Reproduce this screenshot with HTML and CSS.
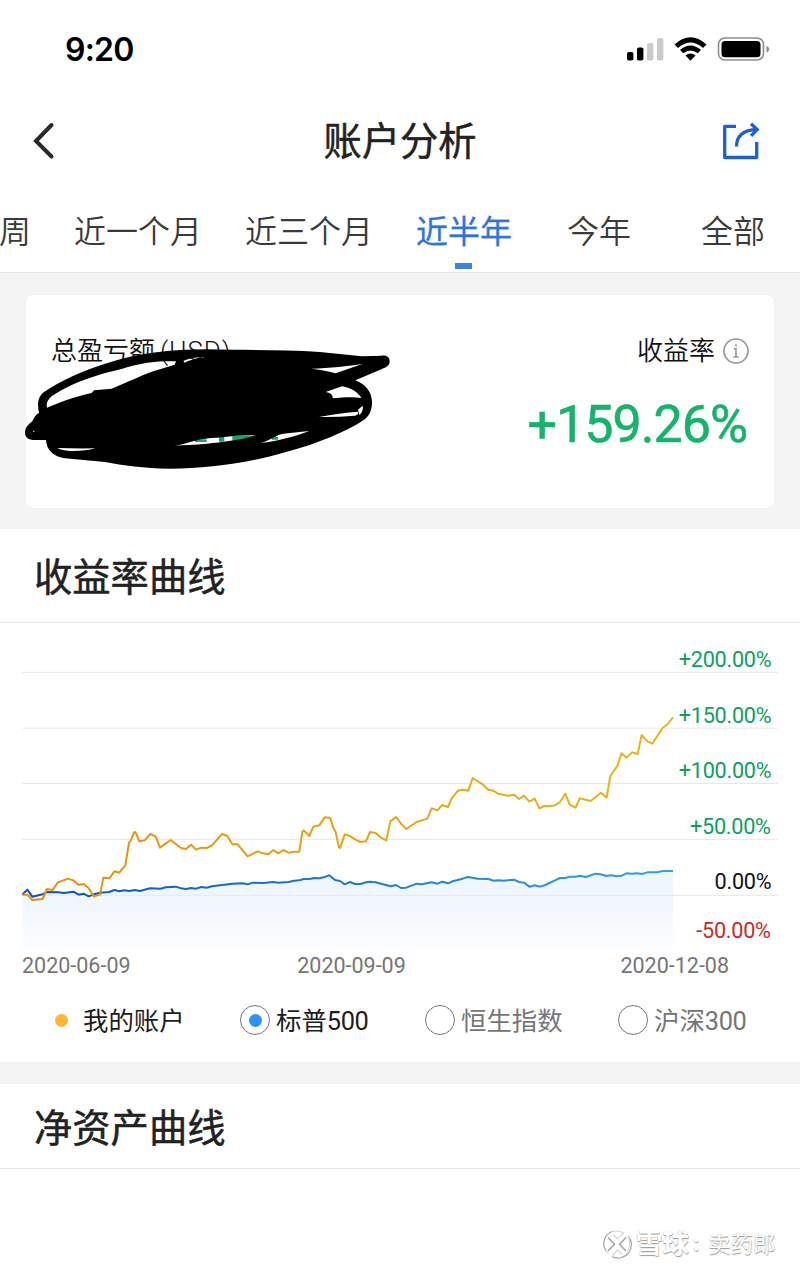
FILE: index.html
```html
<!DOCTYPE html>
<html lang="zh-CN">
<head>
  <meta charset="UTF-8" />
  <meta name="viewport" content="width=device-width, initial-scale=1.0" />
  <title>账户分析</title>
  <link rel="stylesheet" href="styles.css">
</head>
<body>

  <div class="status-bar">
    <span class="time">9:20</span>
    <svg class="status-icons" width="144" height="26" viewBox="0 0 144 26">
      <rect x="1" y="15" width="6.4" height="8.5" rx="1.8" />
      <rect x="11" y="10.5" width="6.4" height="13" rx="1.8" />
      <g fill="#cbcbcb">
        <rect x="21" y="6" width="6.4" height="17.5" rx="1.8" />
        <rect x="31" y="1" width="6.4" height="22.5" rx="1.8" />
      </g>
      <path d="M48.5 7.5 Q64.5 -7 80.5 7.5 L77 11 Q64.5 0 52 11 Z M54 13 Q64.5 4 75 13 L71.7 16.3 Q64.5 10.5 57.3 16.3 Z M59.5 18.5 Q64.5 14.5 69.5 18.5 L64.5 23.7 Z" />
      <rect x="92.5" y="1" width="45" height="22" rx="6.5" fill="none" stroke="#8d8d8d" stroke-width="1.6" />
      <rect x="95.5" y="4" width="39" height="16.3" rx="3.5" />
      <path d="M140.5 8.5 Q143.2 10 143.2 12.3 Q143.2 14.6 140.5 16 Z" fill="#8d8d8d" />
    </svg>
  </div>

  <header class="nav">
    <svg class="back" width="24" height="38" viewBox="0 0 24 38">
      <path d="M19.5 3 L4 19 L19.5 34.5" fill="none" stroke="#29292b" stroke-width="4" stroke-linecap="round" />
    </svg>
    <h1>账户分析</h1>
    <svg class="share" width="38" height="40" viewBox="0 0 38 40">
      <g fill="none" stroke="#1a62c9" stroke-width="3.3">
        <path d="M14 5.3 H2.7 V36.5 H34.7 V21" stroke-linejoin="round" />
        <path d="M14.5 25.5 C14.5 15.5 21 8.6 35 8.6 M29 2.8 L35.2 8.6 L29 14.8" />
      </g>
    </svg>
  </header>

  <nav class="tabs">
    <a class="tab tab-week">周</a>
    <a class="tab">近一个月</a>
    <a class="tab">近三个月</a>
    <a class="tab active">近半年</a>
    <a class="tab tab-year">今年</a>
    <a class="tab tab-all">全部</a>
  </nav>

  <section class="summary">
    <div class="card">
      <div class="amount">
        <div class="label">总盈亏额<span class="unit">(USD)</span></div>
      </div>
      <div class="rate">
        <div class="label">收益率
          <svg width="26" height="26" viewBox="0 0 26 26">
            <g fill="none" stroke="#969696">
              <circle cx="13" cy="13" r="12" stroke-width="1.7" />
              <path d="M13 6.2 V8.4 M10.8 10.8 H13 V19 M10.5 19 H15.5" stroke-width="1.6" />
            </g>
          </svg>
        </div>
        <div class="value">+159.26%</div>
      </div>

      <!-- hand-drawn scribble over the amount -->
      <svg class="scribble" width="410" height="170" viewBox="0 0 1230 510">
        <path fill="#12a866" d="M585 358 H620 V366 H585 Z M657 350 H673 V365 H657 Z M697 348 H760 L730 362 H697 Z M815 350 H834 V359 H815 Z" />
        <path fill="#000" fill-rule="evenodd" d="
          M75 338 C75 320 88 312 97 304 C102 292 108 283 117 279 C112 254 112 231 132 216
          C180 184 254 149 330 127 C410 101 510 88 620 88 C740 91 850 89 960 96 L1085 109 L1145 107
          C1163 105 1169 114 1169 124 C1169 138 1158 142 1146 147 L1066 181
          C1098 193 1115 218 1116 244 C1117 266 1110 288 1088 302 C1040 333 960 369 850 398
          C735 431 620 445 510 446 C430 445 370 436 315 426 L195 415 C162 411 139 390 138 360
          L100 360 C83 359 75 350 75 338 Z
          M141 263 C137 246 147 232 170 219 C230 184 290 165 350 151 C395 138 440 125 497 124 L528 124 L524 134 L460 154
          C415 170 370 193 335 206 L282 211 L275 219 C220 231 180 247 141 263 Z
          M551 122 C570 114 590 111 616 112 Q580 116 552 128 Z
          M934 146 C990 144 1045 139 1089 131 L1007 160 C980 153 960 149 934 146 Z
          M977 216 L1026 199 C1055 204 1074 217 1084 234 C1060 230 1030 232 998 235 Q1000 220 977 216 Z
          M957 291 Q1020 279 1073 275 Q1078 284 1065 287 Q1010 292 957 291 Z
          M1074 269 L1088 257 Q1091 274 1078 285 Z
          M524 377 C570 369 600 353 650 353 Q710 346 768 346 C725 360 635 374 524 377 Z
          M783 369 C815 358 830 344 850 341 L927 333 C880 352 830 363 783 369 Z
          M172 384 Q230 386 286 385 Q255 394 210 393 Q184 391 172 384 Z
          M99 332 L104 334 L101 337 Z" />
      </svg>
    </div>
  </section>

  <h2 class="section-title">收益率曲线</h2>

  <section class="chart-box">
    <svg class="chart" width="800" height="310" viewBox="0 0 2400 930">
      <defs>
        <linearGradient id="gold" x1="0" x2="1" y1="0" y2="0">
          <stop offset="0" stop-color="#e88d0c" />
          <stop offset="1" stop-color="#e7b71d" />
        </linearGradient>
        <linearGradient id="blue" x1="0" x2="1" y1="0" y2="0">
          <stop offset="0" stop-color="#0b4fc4" />
          <stop offset="1" stop-color="#2fa4e8" />
        </linearGradient>
        <linearGradient id="area" x1="0" x2="0" y1="0" y2="1">
          <stop offset="0" stop-color="#edf5fd" />
          <stop offset="0.4" stop-color="#f2f7fe" />
          <stop offset="1" stop-color="#fcfdff" />
        </linearGradient>
      </defs>
      <path fill="url(#area)" d="M67 764 L82 749 97 770 128 763 141 756 220 755 266 769 300 758 343 750 420 753 450 745 528 740 558 747 620 743 697 731 790 729 866 726 911 717 974 711 988 706 1005 720 1034 733 1050 726 1081 732 1110 725 1173 739 1203 744 1250 731 1312 731 1344 730 1360 723 1403 711 1465 717 1542 719 1572 728 1588 740 1620 740 1665 721 1709 710 1757 711 1787 701 1850 709 1880 700 1942 697 2019 693 V930 H67 Z" />
      <path class="grid" d="M66 97 H2334 M66 264.5 H2334 M66 430.5 H2334 M66 598 H2334 M66 766 H2334" />
      <polyline class="line" stroke="url(#blue)" points="
        67,764 82,749 97,770 128,763 141,756 174,757 192,759 220,755 236,764 251,761 266,769 282,763 300,758 328,756
        343,750 358,754 373,751 388,753 404,750 420,753 450,745 482,746 497,742 528,740 543,745 558,747 573,744 588,746
        604,741 620,743 636,739 666,735 697,731 728,730 743,733 758,728 790,729 820,726 835,728 866,726 882,722 898,721
        911,717 928,717 943,714 958,715 974,711 988,706 1005,720 1020,723 1034,733 1050,726 1065,732 1081,732 1098,727
        1110,725 1127,727 1143,731 1173,739 1188,735 1203,744 1219,743 1250,731 1265,733 1295,727 1312,731 1327,725
        1344,730 1360,723 1388,716 1403,711 1418,713 1433,716 1465,717 1480,722 1495,721 1512,722 1542,719 1557,726
        1572,728 1588,740 1604,736 1620,740 1636,735 1665,721 1680,714 1696,714 1709,710 1727,710 1740,707 1757,711
        1787,701 1802,703 1819,708 1835,706 1850,709 1865,707 1880,700 1896,701 1910,700 1926,702 1942,697 1972,697
        1987,693 2019,693" />
      <polyline class="line" stroke="url(#gold)" points="
        67,764 82,764 97,780 128,777 141,747 158,750 174,727 204,716 220,721 236,735 251,732 266,745 282,770 300,763
        310,713 328,715 343,694 358,698 376,676 387,608 392,602 402,577 407,577 418,604 434,601 451,582 467,589 480,623
        512,600 543,624 558,627 573,614 588,629 604,623 620,624 636,616 666,582 682,588 697,613 713,613 743,649 773,634
        789,640 805,643 820,630 835,640 850,630 866,638 882,635 898,635 907,575 911,571 928,588 940,560 958,556 974,532
        990,533 1001,566 1007,576 1017,623 1021,623 1034,583 1050,588 1065,598 1081,606 1098,604 1110,576 1127,579
        1143,593 1159,601 1171,544 1188,531 1205,553 1219,567 1250,546 1282,536 1295,505 1312,511 1327,495 1344,501
        1355,475 1374,452 1388,449 1405,452 1418,414 1449,434 1465,449 1480,452 1496,462 1526,467 1542,464 1557,477
        1572,467 1588,485 1604,476 1618,505 1633,498 1650,499 1665,496 1680,486 1696,461 1709,494 1727,503 1739,475
        1772,483 1803,458 1820,473 1831,408 1853,376 1864,340 1880,353 1896,337 1913,342 1925,285 1942,304 1957,311
        1987,265 2002,253 2019,232" />
      <g class="axis" text-anchor="end">
        <text x="2314" y="80">+200.00%</text>
        <text x="2314" y="248">+150.00%</text>
        <text x="2314" y="415">+100.00%</text>
        <text x="2312" y="581">+50.00%</text>
        <text x="2314" y="748" class="zero">0.00%</text>
        <text x="2312" y="894" class="loss">-50.00%</text>
      </g>
    </svg>
    <div class="dates">
      <span>2020-06-09</span>
      <span>2020-09-09</span>
      <span>2020-12-08</span>
    </div>
    <div class="legend">
      <span class="item on mine"><i class="dot"></i><span>我的账户</span></span>
      <span class="item on sp"><i class="radio checked"></i><span>标普<b>500</b></span></span>
      <span class="item hs"><i class="radio"></i><span>恒生指数</span></span>
      <span class="item csi"><i class="radio"></i><span>沪深<b>300</b></span></span>
    </div>
  </section>

  <h2 class="section-title assets">净资产曲线</h2>

  <footer class="watermark">
    <svg width="30" height="30" viewBox="0 0 30 30">
      <g fill="none" stroke="#a5a5a5" stroke-width="1.2">
        <path d="M10 2.5 A13.2 13.2 0 0 0 4 22 M10 27.5 A13.2 13.2 0 0 0 26 7" />
        <path d="M6 8.5 L12.5 15.3 L6 22 M24 8.5 L17.5 15.3 L24 22" stroke-width="1.6" />
        <path d="M10 2.5 Q16 1 21.5 4 L15.5 10 L11.5 6 M4 22 L6.5 24.5 M10 27.5 L15.5 21 L20 25.5 M26 7 Q29.5 14 26 22" stroke="#d4d4d4" />
      </g>
    </svg>
    <span class="brand">雪球</span><span class="colon">:</span><span class="author">卖药郎</span>
  </footer>

</body>
</html>
```
FILE: styles.css
```css
* {
  box-sizing: border-box;
}

body {
  margin: 0;
  width: 800px;
  height: 1268px;
  overflow: hidden;
  background: #fff;
  color: #222;
  font-family: Roboto, "Noto Sans CJK SC", sans-serif;
}

.status-bar {
  display: flex;
  justify-content: space-between;
  align-items: center;
  height: 98px;
  padding: 1px 30px 0 65px;
}

.time {
  font-family: Inter, sans-serif;
  font-size: 32px;
  font-weight: 600;
  color: #000;
  letter-spacing: -0.8px;
}

.nav {
  display: flex;
  justify-content: space-between;
  align-items: center;
  height: 86px;
  padding: 0 40px 0 32px;
}

.nav h1 {
  margin: 2px 0 0 22px;
  font-size: 38.3px;
  font-weight: 400;
  line-height: 50px;
  -webkit-text-stroke: 0.5px #222;
}

.tabs {
  display: flex;
  height: 89px;
  border-bottom: 1px solid #e6e6e6;
}

.tab {
  position: relative;
  flex: none;
  margin-right: 43px;
  padding-top: 25px;
  font-size: 32px;
  line-height: 46px;
  color: #3a3a3a;
  font-weight: 350;
}

.tab-week {
  margin-left: -1px;
}

.tab.active {
  margin-right: 55px;
  color: #2f74dd;
  font-weight: 400;
  -webkit-text-stroke: 0.3px #2f74dd;
}

.tab.active::after {
  content: "";
  position: absolute;
  left: 39px;
  bottom: 3px;
  width: 17px;
  height: 6px;
  background: #3484e8;
}

.tab-year {
  margin-right: 70px;
}

.tab-all {
  margin-right: 0;
}

.summary {
  height: 256px;
  padding: 22px 26px;
  background: #f4f4f4;
}

.card {
  position: relative;
  display: flex;
  justify-content: space-between;
  height: 213px;
  padding: 38px 25px 0 25px;
  background: #fff;
  border-radius: 8px;
}

.label {
  display: flex;
  align-items: center;
  height: 36px;
  font-size: 26px;
  line-height: 32px;
  font-weight: 350;
  color: #111;
}

.label svg {
  margin-left: 8px;
}

.unit {
  margin-left: 5px;
  letter-spacing: 1px;
}

.rate {
  display: flex;
  flex-direction: column;
  align-items: flex-end;
}

.value {
  margin: 25px 2px 0 0;
  font-size: 52px;
  line-height: 62px;
  letter-spacing: -1px;
  color: #15b36c;
  -webkit-text-stroke: 0.6px #15b36c;
}

.scribble {
  position: absolute;
  left: -26px;
  top: 25px;
}

.section-title {
  margin: 0;
  height: 94px;
  padding: 3px 0 0 34px;
  border-bottom: 1px solid #e6e6e6;
  font-size: 38.3px;
  font-weight: 400;
  line-height: 92px;
  -webkit-text-stroke: 0.5px #222;
}

.chart-box {
  height: 461px;
  padding-top: 17px;
  border-bottom: 22px solid #f4f4f4;
}

.chart {
  display: block;
}

.grid {
  stroke: #e8e8e8;
  stroke-width: 3;
}

.line {
  fill: none;
  stroke-width: 6;
  stroke-linejoin: round;
}

.axis {
  font-size: 65px;
  letter-spacing: -0.8px;
  fill: #0e9f5e;
}

.axis .zero {
  fill: #111;
}

.axis .loss {
  fill: #cc2a2a;
}

.dates {
  display: flex;
  justify-content: space-between;
  padding: 0 71px 0 22px;
  font-size: 21.5px;
  line-height: 32px;
  color: #757575;
}

.dates span:nth-child(2) {
  margin-right: 48px;
}

.legend {
  display: flex;
  height: 76px;
  align-items: center;
}

.item {
  display: flex;
  align-items: center;
  font-size: 25.4px;
  line-height: 34px;
  color: #757575;
}

.item span {
  margin-top: 2px;
}

.item b {
  font-weight: 400;
  letter-spacing: -0.4px;
}

.item.on {
  color: #1c1c1c;
}

.dot {
  width: 13px;
  height: 13px;
  margin-right: 15px;
  border-radius: 50%;
  background: #fbb731;
}

.radio {
  display: flex;
  justify-content: center;
  align-items: center;
  width: 30px;
  height: 30px;
  margin-right: 6px;
  border: 1px solid #77777c;
  border-radius: 50%;
}

.radio.checked::after {
  content: "";
  width: 13px;
  height: 13px;
  border-radius: 50%;
  background: #2f92f7;
}

.mine {
  width: 240px;
  padding-left: 55px;
}

.sp {
  width: 185px;
}

.hs {
  width: 193px;
}

.section-title.assets {
  height: 85px;
  line-height: 83px;
}

.watermark {
  display: flex;
  align-items: center;
  height: 99px;
  padding: 50px 0 0 602px;
  color: #fff;
  text-shadow: 0.5px 0.5px 1px #999, -0.5px -0.5px 1px #ccc;
}

.brand {
  margin-left: 4px;
  font-size: 26.5px;
  line-height: 36px;
  font-weight: 700;
}

.colon {
  width: 19px;
  padding-left: 4px;
  font-size: 22px;
  line-height: 36px;
  font-weight: 700;
}

.author {
  font-size: 22.5px;
  line-height: 36px;
}
```
